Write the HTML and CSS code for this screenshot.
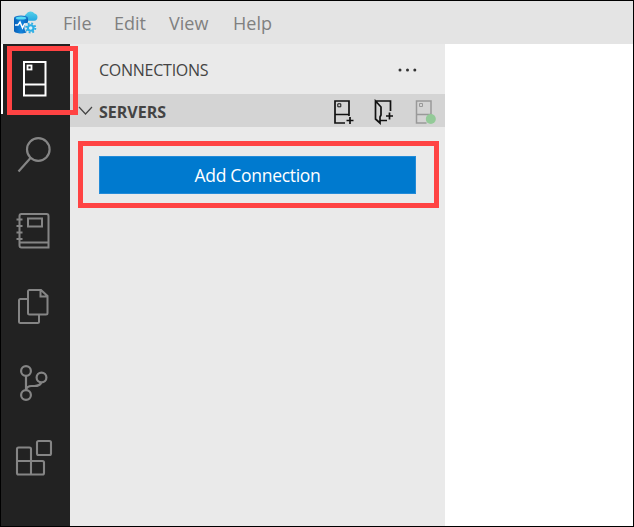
FILE: index.html
```html
<!DOCTYPE html>
<html lang="en">
<head>
<meta charset="utf-8">
<title>Connections</title>
<link rel="stylesheet" href="styles.css">
</head>
<body>
<div class="window">
  <header class="titlebar">
    <svg class="logo" width="26" height="26" viewBox="0 0 26 26">
      <defs>
        <linearGradient id="cloud" x1="0" y1="0" x2="0" y2="1"><stop offset="0" stop-color="#55cfe8"/><stop offset="1" stop-color="#26a9e2"/></linearGradient>
        <linearGradient id="db" x1="0" y1="0" x2="1" y2="0"><stop offset="0" stop-color="#075db5"/><stop offset=".5" stop-color="#1284dc"/><stop offset="1" stop-color="#0862b8"/></linearGradient>
      </defs>
      <path d="M13 10.500a3.800 3.800 0 0 1 .2-6.400A5 5 0 0 1 21.500 3.500a3.700 3.700 0 0 1-.3 7.300h-6z" fill="url(#cloud)"/>
      <path d="M1 8v13c0 3.300 14 3.300 14 0V8z" fill="url(#db)"/>
      <ellipse cx="8" cy="8" rx="7" ry="2.600" fill="#1976c9"/>
      <ellipse cx="8" cy="8" rx="5.200" ry="1.600" fill="#58dcf5"/>
      <path d="M2 15h3l2-3 2.500 6 2-4H14" fill="none" stroke="#fff" stroke-width="1.500"/>
      <circle cx="17.700" cy="18" r="4.800" fill="none" stroke="#e6e6e6" stroke-width="3"/>
      <circle cx="17.700" cy="18" r="4.600" fill="none" stroke="#2daee5" stroke-width="2" stroke-dasharray="1.800 1.813"/>
      <circle cx="17.700" cy="18" r="2.800" fill="#d9f1fb" stroke="#2daee5" stroke-width="2.100"/>
    </svg>
    <nav class="menu">
      <span class="file">File</span><span class="edit">Edit</span><span class="view">View</span><span class="help">Help</span>
    </nav>
  </header>
  <div class="body">
    <aside class="activity">
      <div class="item active">
        <svg width="26" height="38" viewBox="0 0 26 38"><path d="M2 2h21.500v33.500H2zM2 24.500h21" fill="none" stroke="#fff" stroke-width="2"/><rect x="5.500" y="5.500" width="4" height="4" fill="none" stroke="#fff" stroke-width="1.800"/></svg>
      </div>
      <div class="item"><svg viewBox="0 0 40 40" width="40" height="40"><g fill="none" stroke="#858585" stroke-width="2.200"><circle cx="23.300" cy="14.500" r="11.300"/><path d="M15.500 23 3.500 36.500"/></g></svg></div>
      <div class="item"><svg viewBox="0 0 40 40" width="40" height="40"><g fill="none" stroke="#858585" stroke-width="2"><path d="M6.500 3h25q2 0 2 2v31.500h-27q-2 0-2-2V5q0-2 2-2zM5 31.500h28.500M13 7.500h14v8H13zM1.500 8.500h6M1.500 15h6M1.500 21.500h6M1.500 28h6"/></g></svg></div>
      <div class="item"><svg viewBox="0 0 40 40" width="40" height="40"><g fill="none" stroke="#858585" stroke-width="2"><path d="M14.500 3H26l6.500 6v17q0 1.500-1.500 1.500H14.500q-1.500 0-1.500-1.500V4.500q0-1.500 1.500-1.500zM25.500 3v6.500h7M13 12H5.500Q4 12 4 13.500v21Q4 36 5.500 36h17q1.500 0 1.500-1.500V28"/></g></svg></div>
      <div class="item"><svg viewBox="0 0 40 40" width="40" height="40"><g fill="none" stroke="#858585" stroke-width="2.200"><circle cx="11" cy="8" r="4.900"/><circle cx="11" cy="32" r="4.900"/><circle cx="26.500" cy="14.500" r="4.900"/><path d="M11 12.500V27M11 27q1-4 5.500-4h3q5.500 0 7-4"/></g></svg></div>
      <div class="item"><svg viewBox="0 0 40 40" width="40" height="40"><g fill="none" stroke="#858585" stroke-width="2.100"><rect x="22" y="2" width="14" height="14" rx="1.500"/><path d="M3.500 8.500h11q1.500 0 1.500 1.500v12h11.500q1.500 0 1.500 1.500V34q0 1.500-1.500 1.500h-24Q2 35.500 2 34V10q0-1.500 1.500-1.500zM2 22h14v13.500"/></g></svg></div>
    </aside>
    <main class="sidebar">
      <div class="heading"><span class="title">CONNECTIONS</span>
        <svg class="more" width="20" height="4"><g fill="#333"><circle cx="2" cy="2" r="1.500"/><circle cx="9.500" cy="2" r="1.500"/><circle cx="16.800" cy="2" r="1.500"/></g></svg>
      </div>
      <div class="section">
        <svg class="chevron" width="15" height="10" viewBox="0 0 15 10"><path d="M1 1l6.500 7L14 1" fill="none" stroke="#444" stroke-width="1.200"/></svg>
        <span class="servers">SERVERS</span>
        <div class="actions">
          <svg width="22" height="26" viewBox="0 0 22 26"><path d="M13 24H3V2h14v15M3 15.500h14M14.500 21.500h7M18 18v7" fill="none" stroke="#111" stroke-width="1.700"/><path d="M5.800 4.800h3v3h-3z" fill="none" stroke="#111"/></svg>
          <svg width="22" height="26" viewBox="0 0 22 26"><path d="M2.500 2h15v10M2.500 2v18l4.500 4V18l1-2V8zM7 21.500h7M16.500 13.500v7M13 17h7" fill="none" stroke="#111" stroke-width="1.700"/></svg>
          <svg width="22" height="26" viewBox="0 0 22 26"><path d="M12.500 24h-10V2H17v14M2.500 15.500H17" fill="none" stroke="#999" stroke-width="1.500"/><path d="M5.500 4.500h3v3h-3z" fill="none" stroke="#999"/><circle cx="16.800" cy="20" r="5" fill="#93ca98"/></svg>
        </div>
      </div>
      <div class="content"><button class="add"><span>Add Connection</span></button></div>
    </main>
    <div class="editor"></div>
  </div>
  <div class="mark mark-icon"></div>
  <div class="mark mark-button"></div>
</div>
</body>
</html>
```
FILE: styles.css
```css
* { box-sizing: border-box; }
body { margin: 0; font-family: "Open Sans", "Noto Sans", sans-serif; }
.window { position: relative; width: 634px; height: 527px; border: 1px solid #000; background: #fff; overflow: hidden; display: flex; flex-direction: column; }
.titlebar { height: 43px; flex: none; background: #e4e4e4; display: flex; align-items: center; padding-left: 12px; }
.logo { flex: none; margin-top: 0; }
.menu { display: flex; margin-left: 24px; font-size: 18px; line-height: 24px; color: #808080; }
.menu span { white-space: nowrap; }
.file { width: 51px; }
.edit { width: 55px; }
.view { width: 64px; }
.body { flex: 1; display: flex; min-height: 0; }
.activity { width: 69px; flex: none; background: #222; }
.item { height: 76px; display: flex; padding: 15px 0 0 14px; }
.item svg { flex: none; }
.active { height: 70px; margin-bottom: 6px; border-left: 2px solid #fff; padding: 16px 0 0 19px; }
.sidebar { width: 375px; flex: none; background: #eaeaea; }
.heading { height: 50px; display: flex; align-items: center; justify-content: space-between; padding: 1px 27px 0 29px; }
.title { font-size: 16px; color: #444; letter-spacing: -.25px; }
.more { flex: none; }
.section { height: 33px; background: #d4d4d4; display: flex; align-items: center; padding: 0 8px; }
.chevron { flex: none; }
.servers { margin: 2px 0 0 6px; font-size: 16px; font-weight: 700; color: #444; }
.actions { display: flex; gap: 19px; margin: 2px 1px 0 auto; }
.content { padding: 29px 29px 0; }
.add { display: flex; align-items: center; justify-content: center; width: 317px; height: 38px; border: 1px solid #238bd8; background: #007acf; color: #fff; font: 17.500px "Open Sans", "Noto Sans", sans-serif; letter-spacing: -.3px; padding: 0; }
.editor { flex: 1; background: #fff; }
.mark { position: absolute; border: 5px solid #ff4343; }
.mark-icon { left: 6px; top: 45px; width: 71px; height: 69px; }
.mark-button { left: 77px; top: 140px; width: 361px; height: 67px; }
```
